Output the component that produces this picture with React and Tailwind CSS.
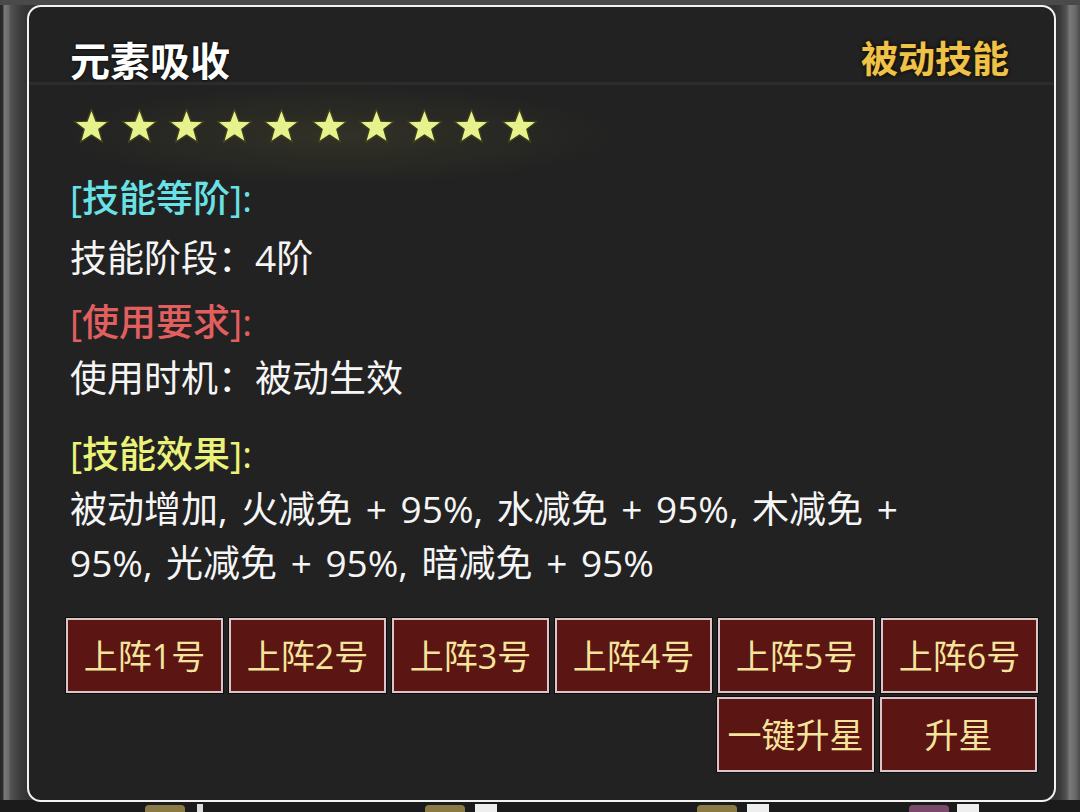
import React from "react";

const FONT = { fontFamily: "'Open Sans', 'Noto Sans CJK SC', sans-serif" };

// five-point star with a fairly fat inner radius
const Star = () => (
  <svg viewBox="0 0 100 100" className="w-[37px] h-[37px]">
    <polygon
      points="50,3 62.4,35.5 97,36.5 70,57.5 80,93 50,73 20,93 30,57.5 3,36.5 37.6,35.5"
      fill="#e6f28c"
      stroke="#3e3e1c"
      strokeWidth="4"
      strokeLinejoin="round"
    />
  </svg>
);

const SlotButton = ({ label }) => (
  <button className="w-[157px] h-[75px] border-2 border-[#dcc5c9] bg-[#5b1512] shadow-[0_0_0_1px_#0e0e0e] text-[34px] leading-none text-[#f4e49c] flex items-center justify-center">
    {label}
  </button>
);

export default function App() {
  const slots = ["上阵1号", "上阵2号", "上阵3号", "上阵4号", "上阵5号", "上阵6号"];

  return (
    <div
      className="relative w-[1080px] h-[812px] overflow-hidden bg-[linear-gradient(90deg,#262626_0px,#2f2f2f_3px,#7a7a7a_4px,#6a6a6a_9px,#555_10px,#4a4a4a_14px,#3c3c3c_20px,#333_27px,#333_1056px,#3a3a3a_1060px,#505050_1066px,#7a7a7a_1070px,#666_1076px,#4a4a4a_1080px)]"
      style={FONT}
    >
      {/* strip of the list underneath, peeking out below the card */}
      <div className="absolute left-0 right-0 bottom-0 h-[12px] bg-[#1b1b1b] flex items-end">
        <div className="ml-[145px] w-[40px] h-[7px] bg-[#8a7a46] rounded-t-sm" />
        <div className="ml-[12px] w-[6px] h-[8px] bg-[#ddd]" />
        <div className="ml-[222px] w-[40px] h-[7px] bg-[#8a7a46] rounded-t-sm" />
        <div className="ml-[10px] w-[22px] h-[8px] bg-[#eee]" />
        <div className="ml-[200px] w-[40px] h-[7px] bg-[#8a7a46] rounded-t-sm" />
        <div className="ml-[10px] w-[22px] h-[8px] bg-[#eee]" />
        <div className="ml-[140px] w-[40px] h-[7px] bg-[#7a4a6a] rounded-t-sm" />
        <div className="ml-[8px] w-[22px] h-[8px] bg-[#eee]" />
      </div>

      <div className="absolute left-0 right-0 top-0 h-[5px] bg-[#4a4a4a]" />

      {/* skill detail card */}
      <div className="relative ml-[27px] mt-[5px] w-[1029px] h-[797px] rounded-[14px] border-2 border-[#f2f2f2] bg-[#222222] overflow-hidden">
        <div className="absolute left-[30px] top-[78px] w-[560px] h-[100px] bg-[radial-gradient(ellipse_at_center,rgba(120,120,60,0.18),rgba(0,0,0,0)_70%)]" />

        <div className="relative h-[75px] pl-[41px] pr-[45px] flex items-end justify-between">
          <div className="text-[40px] leading-[42px] font-bold text-white [text-shadow:0_0_3px_#000]">
            元素吸收
          </div>
          <div className="text-[37px] leading-[42px] font-bold text-[#efc24a] [text-shadow:0_0_2px_#3a2a00,0_0_4px_#000] pb-[2px]">
            被动技能
          </div>
        </div>
        <div className="relative h-[3px] bg-[#2c2c2c]" />

        <div className="relative pl-[44px] pt-[23px] flex gap-[10.5px]">
          {Array.from({ length: 10 }).map((_, i) => (
            <Star key={i} />
          ))}
        </div>

        <div className="relative pl-[41px] text-[37px] leading-[54px] text-[#f5f5f5]">
          <div className="mt-[26px] font-medium text-[#68e2e6]">[技能等阶]:</div>
          <div className="mt-[6px]">技能阶段：4阶</div>
          <div className="mt-[10px] font-medium text-[#e25f5f]">[使用要求]:</div>
          <div className="mt-[2px]">使用时机：被动生效</div>
          <div className="mt-[22px] font-medium text-[#ebf27a]">[技能效果]:</div>
          <div className="mt-[1px] [word-spacing:4px]">
            被动增加, 火减免 + 95%, 水减免 + 95%, 木减免 +
            <br />
            95%, 光减免 + 95%, 暗减免 + 95%
          </div>
        </div>

        <div className="relative mt-[28px] pl-[37px] flex flex-col gap-[4px]">
          <div className="flex gap-[6px]">
            {slots.map((s) => (
              <SlotButton key={s} label={s} />
            ))}
          </div>
          <div className="flex gap-[6px] justify-end pr-[17px]">
            <SlotButton label="一键升星" />
            <SlotButton label="升星" />
          </div>
        </div>
      </div>
    </div>
  );
}
